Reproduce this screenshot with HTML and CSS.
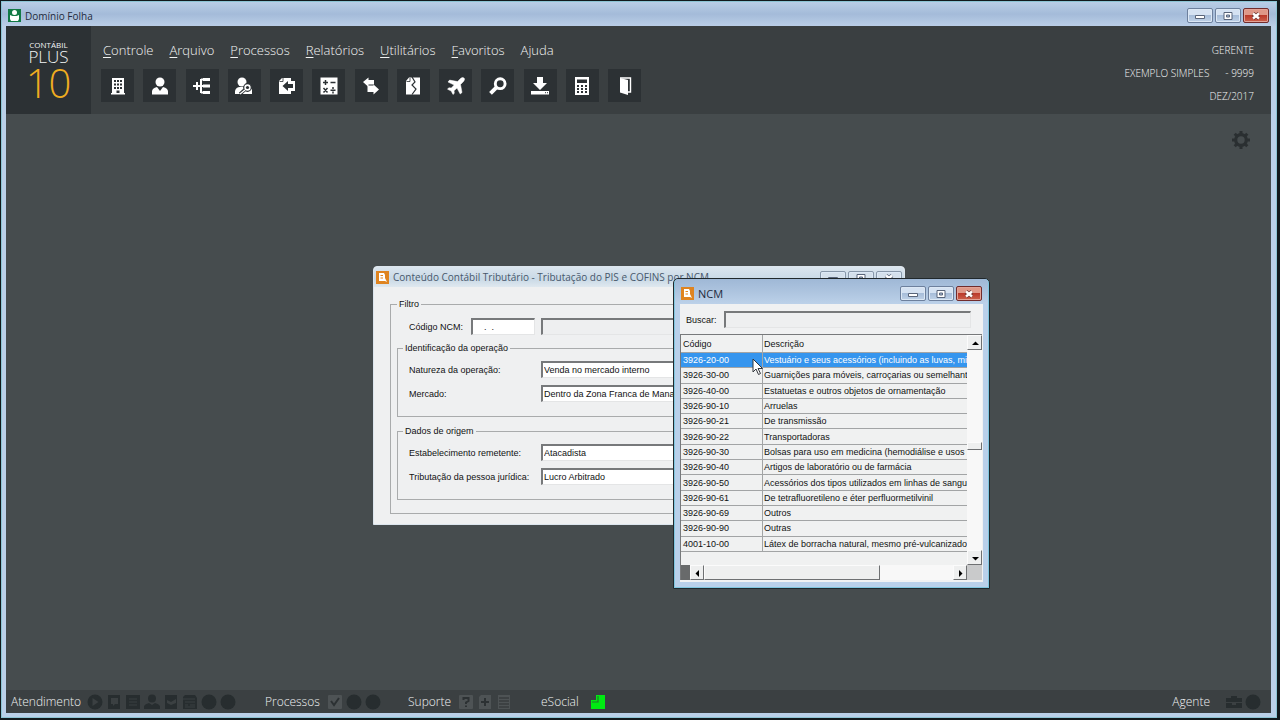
FILE: index.html
```html
<!DOCTYPE html>
<html lang="pt-BR">
<head>
<meta charset="utf-8">
<title>Domínio Folha</title>
<link rel="stylesheet" href="styles.css">
</head>
<body>
<div class="app">
  <div class="titlebar">
    <svg class="app-icon" viewBox="0 0 13 13"><rect width="13" height="13" fill="#127a45"/><circle cx="6.500" cy="3.500" r="2.500" fill="#fff"/><path d="M2 6l2.500 1h4L11 6v4l-1 2H3l-1-2z" fill="#fff"/></svg>
    <span class="title">Domínio Folha</span>
    <div class="window-buttons">
      <button aria-label="Minimizar"><svg viewBox="0 0 12 10"><path d="M1.500 4.500h9v3h-9z" fill="#fff" stroke="#59657a"/></svg></button>
      <button aria-label="Maximizar"><svg viewBox="0 0 12 10"><path d="M2 1.500h8v7H2z" fill="#fff" stroke="#59657a"/><path d="M4.500 4h3v2h-3z" fill="#a9bcd6" stroke="#59657a"/></svg></button>
      <button class="close" aria-label="Fechar"><svg viewBox="0 0 12 10"><path d="M3 2.500l6 5M9 2.500l-6 5" stroke="#6d3530" stroke-width="4"/><path d="M3 2.500l6 5M9 2.500l-6 5" stroke="#fff" stroke-width="2.400"/></svg></button>
    </div>
  </div>

  <header class="header">
    <div class="logo"><span class="logo-top">CONTÁBIL</span><span class="logo-mid">PLUS</span><span class="logo-num">10</span></div>
    <div class="nav">
      <nav class="menu">
        <a href="#"><u>C</u>ontrole</a><a href="#"><u>A</u>rquivo</a><a href="#"><u>P</u>rocessos</a><a href="#"><u>R</u>elatórios</a><a href="#"><u>U</u>tilitários</a><a href="#"><u>F</u>avoritos</a><a href="#">Ajuda</a>
      </nav>
      <div class="toolbar">
        <button aria-label="Empresas"><svg viewBox="0 0 18 18"><path d="M3 1h12v15h1v1.500H2V16h1z" fill="#fff"/><path d="M5 3h2v2H5zM8 3h2v2H8zM11 3h2v2h-2zM5 6.500h2v2H5zM8 6.500h2v2H8zM11 6.500h2v2h-2zM5 10h2v2H5zM8 10h2v2H8zM11 10h2v2h-2zM7.500 13.500h3V16h-3z" fill="#2c3134"/></svg></button>
        <button aria-label="Empregados"><svg viewBox="0 0 18 18"><circle cx="9" cy="5" r="4.500" fill="#fff"/><path d="M1 17.500v-3Q1 11 6 10l3 4 3-4q5 1 5 4.500v3z" fill="#fff"/></svg></button>
        <button aria-label="Lançamentos"><svg viewBox="0 0 18 18"><path d="M0 9h10M4 5v8M8 2v14M8 2.500h9M8 9h9M8 15.500h9" stroke="#fff" stroke-width="2"/><path d="M10 1h7v3h-7zM10 7.500h7v3h-7zM10 14h7v3h-7z" fill="#fff"/></svg></button>
        <button aria-label="Consulta de empregados"><svg viewBox="0 0 18 18"><circle cx="7" cy="5" r="4.500" fill="#fff"/><path d="M0 17v-3q1-4 5-4h6l6 2v5z" fill="#fff"/><circle cx="12.500" cy="10.500" r="3.800" fill="#fff" stroke="#2c3134" stroke-width="1.200"/><circle cx="12.500" cy="10.500" r="1.600" fill="#2c3134"/><path d="M9.500 13L5 17" stroke="#2c3134" stroke-width="3.400"/><path d="M10 13l-5 4" stroke="#fff" stroke-width="1.500"/></svg></button>
        <button aria-label="Importar"><svg viewBox="0 0 18 18"><path d="M1 4l3-3h9v3h4v10h-4v3H1z" fill="#fff"/><path d="M4.500 9l5.500-5v3h5v4h-5v3z" fill="#2c3134"/><path d="M1.500 4.500H5V1" fill="none" stroke="#2c3134" stroke-width=".8"/></svg></button>
        <button aria-label="Cálculos"><svg viewBox="0 0 18 18"><path d="M.5.500h17v17H.5z" fill="#fff"/><path d="M3 5.500h5M5.500 3v5M10.500 5.500h5M3.500 11l4 4.500M7.500 11l-4 4.500M10.500 13.200h5M13 10v2M13 14.500v2" stroke="#2c3134" stroke-width="1.500"/></svg></button>
        <button aria-label="Transferir"><svg viewBox="0 0 18 18"><path d="M1 5l5.500-4.500V3H12v4.500H6.500V10z" fill="#fff"/><path d="M17 12.500L11.500 17.500V15H5.500V8.500h6V7.500z" fill="#fff"/></svg></button>
        <button aria-label="Rescisão"><svg viewBox="0 0 18 18"><path d="M5 .5h11v17H2V4z" fill="#fff"/><path d="M8 0l3 5-3 3 4 4-4 5.500" fill="none" stroke="#2c3134" stroke-width="1.200"/><path d="M2.500 4.500H6V1" fill="none" stroke="#2c3134" stroke-width=".8"/></svg></button>
        <button aria-label="Férias"><svg viewBox="0 0 18 18"><path d="M17 1q1.300 1.300-.5 3.500L13.500 7.500l1.500 8-1.800 1.500L10 11l-3 2.800.3 2.500-1.300 1.200L4.200 14 .5 12.200l1.300-1.400 2.500.2L7.200 8 1 5l1.600-1.900 8 1.500L13.500 1.500q2-1.700 3.500-.5z" fill="#fff" stroke="#fff" stroke-width=".5"/></svg></button>
        <button aria-label="Pesquisar"><svg viewBox="0 0 18 18"><circle cx="11.200" cy="6.700" r="4.900" fill="none" stroke="#fff" stroke-width="2.900"/><path d="M7.500 10.300l-6 6" stroke="#fff" stroke-width="3.900"/></svg></button>
        <button aria-label="Baixar"><svg viewBox="0 0 18 18"><path d="M6 0h6v6h4l-7 7-7-7h4zM0 14h18v3.500H0z" fill="#fff"/><path d="M14 15.700h1M16 15.700h1" stroke="#2c3134"/></svg></button>
        <button aria-label="Calculadora"><svg viewBox="0 0 18 18"><path d="M2 0h14v18H2z" fill="#fff"/><path d="M4 2.500h10v3.500H4zM4 8h2v2H4zM8 8h2v2H8zM12 8h2v2h-2zM4 11h2v2H4zM8 11h2v2H8zM12 11h2v2h-2zM4 14h2v2H4zM8 14h2v2H8zM12 14h2v2h-2z" fill="#2c3134"/></svg></button>
        <button aria-label="Sair"><svg viewBox="0 0 18 18"><path d="M4 1h10.500v14H11" fill="none" stroke="#fff" stroke-width="1.400"/><path d="M4 1l8 2v15l-8-2.500z" fill="#fff"/></svg></button>
      </div>
    </div>
    <div class="session"><span>GERENTE</span><span class="company"><span>EXEMPLO SIMPLES</span><span>- 9999</span></span><span>DEZ/2017</span></div>
  </header>

  <main class="desktop">
    <button class="gear" aria-label="Configurações"><svg viewBox="0 0 18 18"><circle cx="9" cy="9" r="5.300" fill="none" stroke="#2a2f31" stroke-width="3.200"/><path d="M9 0v3M9 15v3M0 9h3M15 9h3M2.700 2.700l2 2M13.300 13.300l2 2M15.300 2.700l-2 2M4.700 13.300l-2 2" stroke="#2a2f31" stroke-width="3"/></svg></button>
  </main>

  <footer class="status">
    <div class="group g-atend"><span>Atendimento</span><span class="icons">
      <svg viewBox="0 0 16 16"><circle cx="8" cy="8" r="7.500"/><path class="cut" d="M5.500 4l6 4-6 4z"/></svg>
      <svg viewBox="0 0 16 16"><path d="M2 1h12v14H2z"/><path class="cut" d="M5 4h7v6H9l-2 2v-2H5z"/></svg>
      <svg viewBox="0 0 16 16"><path d="M1 1h14v14H1z"/><path class="line" d="M4 5h8M4 8h8M4 11h8"/></svg>
      <svg viewBox="0 0 16 16"><circle cx="8" cy="4.500" r="4"/><path d="M0 15v-3q1-2 5-3l3 2 3-2q4 1 5 3v3z"/></svg>
      <svg viewBox="0 0 16 16"><path d="M2 1h12v14H2z"/><path class="cut" d="M4 6l4 2 5-3v4l-5 2-4-2z"/></svg>
      <svg viewBox="0 0 16 16"><path d="M3 1h10l2 3v11H1V3z"/><path class="line" d="M0 5h13M3 8h10M3 11h3M8 11h5M3 13h10"/></svg>
      <svg viewBox="0 0 16 16"><circle cx="8" cy="8" r="7.500"/></svg>
      <svg viewBox="0 0 16 16"><circle cx="8" cy="8" r="7.500"/></svg></span></div>
    <div class="group g-proc"><span>Processos</span><span class="icons">
      <svg viewBox="0 0 16 16"><rect class="pale" x="1" y="1" width="14" height="14" rx="1"/><path d="M4 7l3 4 5-7" class="mark"/></svg>
      <svg viewBox="0 0 16 16"><circle cx="8" cy="8" r="7.500"/></svg>
      <svg viewBox="0 0 16 16"><circle cx="8" cy="8" r="7.500"/></svg></span></div>
    <div class="group g-sup"><span>Suporte</span><span class="icons">
      <svg viewBox="0 0 16 16"><rect class="pale" x="1" y="1" width="14" height="14" rx="1"/><path class="mark" d="M5.500 6V4h5v3L8 8.500V10M8 11.500v1.500"/></svg>
      <svg viewBox="0 0 16 16"><path class="pale" d="M4 1h10v14H2V3z"/><path class="mark" d="M8 4v8M4 8h8"/></svg>
      <svg viewBox="0 0 16 16"><path class="pale" d="M2 1h12v14H2z"/><path class="mark thin" d="M3 4h10M3 7h10M3 10h10M3 13h10"/></svg></span></div>
    <div class="group g-esoc"><span>eSocial</span><svg viewBox="0 0 14 14"><path d="M5 0h9v14H0V5h5z" fill="#00ea12"/><path d="M7 1v6H1" fill="none" stroke="#247b2b" stroke-width="1.200"/></svg></div>
    <div class="group g-agent"><span>Agente</span><span class="icons">
      <svg viewBox="0 0 16 16"><path d="M5 4V2h6v2h5v4H0V4zM0 9h6v2h4V9h6v5H0z"/></svg>
      <svg viewBox="0 0 16 16"><circle cx="8" cy="8" r="7.500"/></svg></span></div>
  </footer>
</div>

<section class="dialog filter" aria-label="Tributação do PIS e COFINS por NCM">
  <div class="titlebar">
    <svg class="app-icon" viewBox="0 0 13 13"><rect width="13" height="13" fill="#df8420"/><path d="M3 2h5l1 2v3l2 4-2-1H3z" fill="#fff"/><path d="M4.500 4.500H7M4.500 7H7" stroke="#df8420"/></svg>
    <span class="title">Conteúdo Contábil Tributário - Tributação do PIS e COFINS por NCM</span>
    <div class="window-buttons">
      <button aria-label="Minimizar"><svg viewBox="0 0 12 10"><path d="M1.500 4.500h9v3h-9z" fill="#fff" stroke="#59657a"/></svg></button>
      <button aria-label="Maximizar"><svg viewBox="0 0 12 10"><path d="M2 1.500h8v7H2z" fill="#fff" stroke="#59657a"/><path d="M4.500 4h3v2h-3z" stroke="#59657a" fill="#a9bcd6"/></svg></button>
      <button aria-label="Fechar"><svg viewBox="0 0 12 10"><path d="M3 2.500l6 5M9 2.500l-6 5" stroke="#59657a" stroke-width="4"/><path d="M3 2.500l6 5M9 2.500l-6 5" stroke="#fff" stroke-width="2.400"/></svg></button>
    </div>
  </div>
  <form class="dialog-body">
    <fieldset class="outer">
      <legend>Filtro</legend>
      <div class="row code-row"><label for="ncm">Código NCM:</label><input id="ncm" type="text" value="  .  ."><input class="readonly" type="text" aria-label="Descrição do NCM" readonly></div>
      <fieldset class="inner">
        <legend>Identificação da operação</legend>
        <div class="row"><label for="nat">Natureza da operação:</label><select id="nat"><option>Venda no mercado interno</option></select></div>
        <div class="row"><label for="merc">Mercado:</label><select id="merc"><option>Dentro da Zona Franca de Manaus</option></select></div>
      </fieldset>
      <fieldset class="inner">
        <legend>Dados de origem</legend>
        <div class="row"><label for="estab">Estabelecimento remetente:</label><select id="estab"><option>Atacadista</option></select></div>
        <div class="row"><label for="trib">Tributação da pessoa jurídica:</label><select id="trib"><option>Lucro Arbitrado</option></select></div>
      </fieldset>
    </fieldset>
  </form>
</section>

<section class="dialog lookup" aria-label="NCM">
  <div class="titlebar">
    <svg class="app-icon" viewBox="0 0 13 13"><rect width="13" height="13" fill="#df8420"/><path d="M3 2h5l1 2v3l2 4-2-1H3z" fill="#fff"/><path d="M4.500 4.500H7M4.500 7H7" stroke="#df8420"/></svg>
    <span class="title">NCM</span>
    <div class="window-buttons">
      <button aria-label="Minimizar"><svg viewBox="0 0 12 10"><path d="M1.500 4.500h9v3h-9z" fill="#fff" stroke="#59657a"/></svg></button>
      <button aria-label="Maximizar"><svg viewBox="0 0 12 10"><path d="M2 1.500h8v7H2z" fill="#fff" stroke="#59657a"/><path d="M4.500 4h3v2h-3z" fill="#a9bcd6" stroke="#59657a"/></svg></button>
      <button class="close" aria-label="Fechar"><svg viewBox="0 0 12 10"><path d="M3 2.500l6 5M9 2.500l-6 5" stroke="#6d3530" stroke-width="4"/><path d="M3 2.500l6 5M9 2.500l-6 5" stroke="#fff" stroke-width="2.400"/></svg></button>
    </div>
  </div>
  <div class="lookup-body">
    <div class="search"><label for="busca">Buscar:</label><input class="readonly" id="busca" type="text"></div>
    <div class="grid">
      <div class="table-area">
        <table>
          <thead><tr><th class="code">Código</th><th>Descrição</th></tr></thead>
          <tbody>
            <tr class="selected"><td>3926-20-00</td><td>Vestuário e seus acessórios (incluindo as luvas, mitenes</td></tr>
            <tr><td>3926-30-00</td><td>Guarnições para móveis, carroçarias ou semelhantes</td></tr>
            <tr><td>3926-40-00</td><td>Estatuetas e outros objetos de ornamentação</td></tr>
            <tr><td>3926-90-10</td><td>Arruelas</td></tr>
            <tr><td>3926-90-21</td><td>De transmissão</td></tr>
            <tr><td>3926-90-22</td><td>Transportadoras</td></tr>
            <tr><td>3926-90-30</td><td>Bolsas para uso em medicina (hemodiálise e usos semelhantes)</td></tr>
            <tr><td>3926-90-40</td><td>Artigos de laboratório ou de farmácia</td></tr>
            <tr><td>3926-90-50</td><td>Acessórios dos tipos utilizados em linhas de sangue</td></tr>
            <tr><td>3926-90-61</td><td>De tetrafluoretileno e éter perfluormetilvinil</td></tr>
            <tr><td>3926-90-69</td><td>Outros</td></tr>
            <tr><td>3926-90-90</td><td>Outras</td></tr>
            <tr><td>4001-10-00</td><td>Látex de borracha natural, mesmo pré-vulcanizado</td></tr>
          </tbody>
        </table>
      </div>
      <div class="vscroll"><button aria-label="Subir"><svg viewBox="0 0 8 8"><path d="M1 6h7L4.500 2.500z"/></svg></button><span class="before"></span><span class="thumb"></span><span class="after"></span><button aria-label="Descer"><svg viewBox="0 0 8 8"><path d="M1 3h7L4.500 6.500z"/></svg></button></div>
      <div class="hscroll"><span class="split"></span><button aria-label="Esquerda"><svg viewBox="0 0 8 8"><path d="M6 1v7L2.500 4.500z"/></svg></button><span class="thumb"></span><span class="track"></span><button aria-label="Direita"><svg viewBox="0 0 8 8"><path d="M3 1v7l3.500-3.500z"/></svg></button></div>
      <div class="corner"></div>
    </div>
  </div>
  <svg class="cursor" viewBox="0 0 12 18"><path d="M1 1v13l3-3 2.500 5.500 2-1L6 10.500h4.500z" fill="#fff" stroke="#33363b"/></svg>
</section>
</body>
</html>
```
FILE: styles.css
```css
* { box-sizing: border-box; }
html, body { height: 100%; }
body {
  margin: 0;
  overflow: hidden;
  position: relative;
  background: #0d1416;
  font-family: "Open Sans", "Noto Sans", sans-serif;
}
button { margin: 0; padding: 0; border: 0; background: none; display: flex; align-items: center; justify-content: center; }
svg { display: block; flex: none; }
a { color: inherit; text-decoration: none; }

/* main window */
.app {
  height: 100%;
  display: flex;
  flex-direction: column;
  border: solid #12191c;
  border-width: 1px 3px 2px 1px;
  background: #bad0e8;
  padding: 1px 6px 5px 5px;
  box-shadow: inset 0 0 0 1px #8cc4d4;
}
.titlebar { display: flex; align-items: center; }
.app > .titlebar {
  height: 24px;
  margin: 0 -5px 0 -4px;
  padding: 3px 7px 0 6px;
  flex: none;
  background: linear-gradient(#b9cde6, #a4bbd9 50%, #bacee7);
}
.app-icon { width: 13px; height: 13px; }
.title { margin-left: 4px; font-size: 10px; line-height: 16px; color: #1f2b3c; white-space: nowrap; }
.window-buttons { display: flex; gap: 2px; margin-left: auto; }
.window-buttons button {
  width: 26px;
  height: 15px;
  border: 1px solid #6d809d;
  border-radius: 2px;
  background: linear-gradient(#d5e2f2 45%, #a7bdd9 50%, #bfd2e8);
  box-shadow: inset 0 0 0 1px #dce8f5;
}
.window-buttons svg { width: 12px; height: 10px; }
.window-buttons .close {
  border-color: #712c2c;
  background: linear-gradient(#df9888 45%, #bb3a2b 50%, #cc624c);
  box-shadow: inset 0 0 0 1px #e3a397;
}

.header { flex: none; height: 88px; display: flex; background: #3a3f41; color: #f2f4f4; }
.logo { width: 85px; background: #2c3134; display: flex; flex-direction: column; align-items: center; padding-top: 14px; font-weight: 300; }
.logo-top { font-size: 8px; line-height: 10px; font-weight: 400; }
.logo-mid { font-size: 17px; line-height: 14px; }
.logo-num { font-size: 40px; line-height: 38px; color: #f0ad20; }
.nav { flex: 1; padding: 14px 0 0 10px; }
.menu { display: flex; gap: 16px; padding-left: 2px; font-size: 13px; line-height: 20px; font-weight: 300; }
.menu u { text-underline-offset: 2px; }
.toolbar { display: flex; justify-content: space-between; width: 540px; margin-top: 9px; }
.toolbar button { width: 33px; height: 33px; background: #2c3134; }
.toolbar svg { width: 18px; height: 18px; }
.session { display: flex; flex-direction: column; align-items: flex-end; padding: 13px 17px 0 0; font-size: 10px; line-height: 23px; font-weight: 300; }
.company { display: flex; gap: 16px; }

.desktop { flex: 1; background: #464c4e; display: flex; justify-content: flex-end; align-items: flex-start; padding: 17px 21px; }
.gear svg { width: 18px; height: 18px; }

.status { flex: none; height: 23px; background: #3b4042; color: #f0f2f2; display: flex; align-items: center; padding: 0 10px 0 5px; font-size: 12px; font-weight: 300; line-height: 20px; }
.group { display: flex; align-items: center; }
.icons { display: flex; gap: 3px; fill: #272d2f; }
.icons svg { width: 16px; height: 16px; }
.cut { fill: #3b4042; }
.line { stroke: #3b4042; }
.pale { fill: #4e5355; }
.mark { fill: none; stroke: #2c3133; stroke-width: 2; }
.thin { stroke-width: 1; }
.g-atend { width: 254px; gap: 6px; }
.g-proc { width: 143px; gap: 7px; }
.g-sup { width: 133px; gap: 7px; }
.g-esoc { gap: 12px; }
.g-esoc svg { width: 14px; height: 14px; }
.g-agent { margin-left: auto; gap: 16px; }

/* child windows */
.dialog { position: absolute; font-family: "Liberation Sans", Arial, sans-serif; font-size: 9px; line-height: 12px; color: #111; }
.dialog .title { font-family: "Open Sans", "Noto Sans", sans-serif; }
.filter { left: 373px; top: 266px; width: 532px; background: #eff0f1; border: 1px solid #dce5ed; border-radius: 4px 4px 0 0; }
.filter > .titlebar { height: 20px; padding: 0 2px; background: linear-gradient(#dbe5ee, #c9d9e6 60%, #dfe8ef); border-radius: 4px 4px 0 0; }
.filter .title { color: #48586c; }
.filter .window-buttons { padding-top: 2px; }
.filter .window-buttons button { background: #d4e0eb; border-color: #8797a9; }
.dialog-body { margin: 0; padding: 11px 14px 10px 16px; }
fieldset { margin: 0; min-width: 0; border: 1px solid #a9abac; }
legend { padding: 0 2px; line-height: 12px; }
.outer { padding: 8px 6px 13px; }
.inner { padding: 7px 11px 14px; display: grid; gap: 7px; margin-top: 7px; }
.inner + .inner { margin-top: 8px; }
.inner legend { margin-left: -6px; }
.row { display: flex; align-items: center; }
.row label { width: 132px; flex: none; white-space: nowrap; }
.code-row { padding: 0 12px; }
.code-row label { width: 62px; }
.dialog input, .dialog select {
  font: inherit;
  color: #111;
  height: 17px;
  margin: 0;
  padding: 0 1px;
  background: #fff;
  border: solid;
  border-width: 2px 1px 1px 2px;
  border-color: #77797b #e4e5e6 #e4e5e6 #77797b;
  border-radius: 0;
  appearance: none;
  flex: 1;
  min-width: 0;
}
.dialog #ncm { flex: none; width: 64px; margin-right: 6px; padding-left: 6px; white-space: pre; }
.dialog .readonly { background: #eeeff0; }

.lookup {
  left: 673px;
  top: 278px;
  width: 317px;
  background: #b9d0ea;
  border: 1px solid #20282c;
  border-radius: 5px 5px 0 0;
  padding: 0 6px 6px;
  box-shadow: inset 0 0 0 1px #7fc6df;
}
.lookup .title { font-size: 11px; }
.lookup > .titlebar { height: 25px; margin: 0 -5px; padding: 4px 6px 0; background: linear-gradient(#9fb8d6, #adc4df 50%, #bcd1e9); border-radius: 4px 4px 0 0; }
.lookup-body { background: #f0f1f2; padding: 7px 1px 2px 0; }
.search { display: flex; align-items: center; padding: 0 11px 0 6px; }
.search label { width: 38px; }
.grid { margin-top: 6px; display: grid; grid-template-columns: 1fr 15px; grid-template-rows: 230px 15px; border: 1px solid #77797b; border-width: 1px 0 0 1px; }
.table-area { overflow: hidden; background: #f0f1f1; }
table { width: 100%; height: 217px; table-layout: fixed; border-collapse: separate; border-spacing: 0; line-height: 12px; }
th, td { padding: 0 0 0 1px; text-align: left; font-weight: 400; white-space: nowrap; overflow: hidden; border: solid #a2a4a5; border-width: 0 1px 1px 0; }
th { height: 18px; }
th:first-child, td:first-child { padding-left: 2px; }
th:last-child, td:last-child { border-right: 0; }
.code { width: 82px; }
.selected td { background: #3595ee; color: #fff; }
.vscroll { display: flex; flex-direction: column; background: #f8f8f8; }
.vscroll button, .hscroll button, .thumb { flex: none; background: #eeefef; border: solid; border-width: 1px; border-color: #fbfbfb #6e7072 #6e7072 #fbfbfb; }
.vscroll button { height: 15px; }
.vscroll svg, .hscroll svg { width: 8px; height: 8px; }
.before { flex: 93; }
.vscroll .thumb { height: 8px; }
.after { flex: 101; }
.hscroll { display: flex; background: #f8f8f8; }
.hscroll button { width: 14px; }
.split { width: 9px; background: #686a6b; }
.hscroll .thumb { flex: 176; }
.track { flex: 74; }
.corner { background: #c9cacb; }
.cursor { position: absolute; left: 78px; top: 79px; width: 12px; height: 18px; }
```
